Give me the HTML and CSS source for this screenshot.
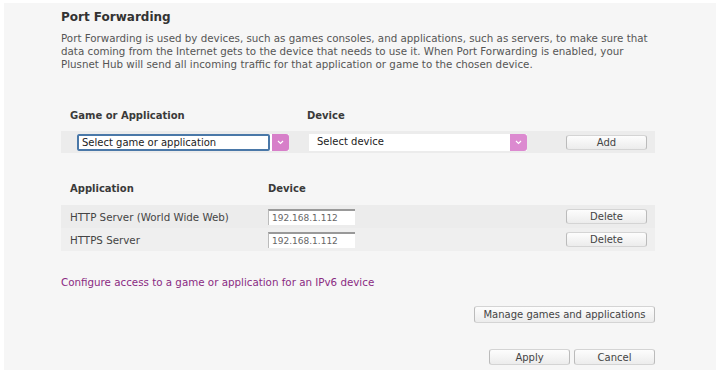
FILE: index.html
```html
<!DOCTYPE html>
<html lang="en">
  <head>
    <meta charset="UTF-8" />
    <title>Port Forwarding</title>
    <link rel="stylesheet" href="styles.css">
  </head>
  <body>
    <div class="panel">
      <h1>Port Forwarding</h1>
      <p class="intro">
        Port Forwarding is used by devices, such as games consoles, and applications, such as servers, to make sure that
        data coming from the Internet gets to the device that needs to use it. When Port Forwarding is enabled, your
        Plusnet Hub will send all incoming traffic for that application or game to the chosen device.
      </p>

      <div class="add-head">
        <span class="col-game">Game or Application</span>
        <span>Device</span>
      </div>
      <div class="add-row">
        <div class="select focused game-select">
          <span class="select-text">Select game or application</span>
          <span class="arrow"><svg width="7" height="5" viewBox="0 0 7 5"><path d="M1 1 L3.5 3.5 L6 1" fill="none" stroke="#fff" stroke-width="1.2"/></svg></span>
        </div>
        <div class="select device-select">
          <span class="select-text">Select device</span>
          <span class="arrow"><svg width="7" height="5" viewBox="0 0 7 5"><path d="M1 1 L3.5 3.5 L6 1" fill="none" stroke="#fff" stroke-width="1.2"/></svg></span>
        </div>
        <button class="btn row-btn">Add</button>
      </div>

      <div class="list-head">
        <span class="col-app">Application</span>
        <span>Device</span>
      </div>
      <div class="list-row">
        <span class="col-app">HTTP Server (World Wide Web)</span>
        <span class="ip">192.168.1.112</span>
        <button class="btn row-btn">Delete</button>
      </div>
      <div class="list-row alt">
        <span class="col-app">HTTPS Server</span>
        <span class="ip">192.168.1.112</span>
        <button class="btn row-btn">Delete</button>
      </div>

      <a class="ipv6-link" href="#">Configure access to a game or application for an IPv6 device</a>

      <div class="manage">
        <button class="btn manage-btn">Manage games and applications</button>
      </div>
      <div class="actions">
        <button class="btn action-btn">Apply</button>
        <button class="btn action-btn">Cancel</button>
      </div>
    </div>
  </body>
</html>
```

FILE: styles.css
```css
* {
  margin: 0;
  padding: 0;
  box-sizing: border-box;
}

body {
  font-family: "DejaVu Sans", Verdana, sans-serif;
  background-color: #fff;
  color: #444;
  padding: 3px 4px 5px;
  font-size: 10.3px;
}

.panel {
  background-color: #f6f6f6;
  height: 367px;
  padding: 7px 0 0 57px;
}

h1 {
  font-size: 12px;
  font-weight: bold;
  color: #333;
  margin-bottom: 8px;
}

.intro {
  width: 595px;
  line-height: 13px;
  color: #555;
}

.add-head,
.list-head {
  display: flex;
  font-size: 10px;
  font-weight: bold;
  color: #3a3a3a;
  padding-left: 9px;
}

.add-head {
  margin-top: 39px;
}

.add-head .col-game {
  width: 237px;
}

.add-row {
  display: flex;
  align-items: center;
  width: 594px;
  height: 22px;
  margin-top: 10px;
  background-color: #ececec;
  padding-left: 16px;
}

.select {
  display: flex;
  height: 17px;
  background-color: #fff;
  font-size: 10px;
}

.select-text {
  flex: 1;
  padding-left: 3px;
  line-height: 15px;
  color: #222;
}

.game-select {
  width: 212px;
  margin-right: 20px;
}

.focused .select-text {
  border: 2px solid #4a78a8;
  border-radius: 2px;
  line-height: 13px;
}

.device-select {
  width: 218px;
}

.device-select .select-text {
  padding-left: 8px;
}

.arrow {
  width: 17px;
  margin-left: 2px;
  background-color: #d77fc9;
  border-radius: 0 3px 3px 0;
  display: flex;
  align-items: center;
  justify-content: center;
}

.device-select .arrow {
  margin-left: 0;
  background-color: #dc8ad0;
}

.btn {
  font-family: inherit;
  font-size: 10px;
  color: #444;
  background: linear-gradient(#fdfdfd, #ececec);
  border: 1px solid #d4d4d4;
  border-left-color: #bbb;
  border-right-color: #bbb;
  border-radius: 3px;
  height: 15px;
  line-height: 13px;
}

.row-btn {
  width: 81px;
  margin-left: auto;
  margin-right: 8px;
}

.list-head {
  margin-top: 30px;
}

.list-head .col-app {
  width: 198px;
}

.list-row {
  display: flex;
  align-items: center;
  width: 594px;
  height: 23px;
  background-color: #ececec;
  padding-left: 9px;
}

.list-head + .list-row {
  margin-top: 11px;
}

.list-row.alt {
  background-color: #efefef;
}

.list-row .col-app {
  width: 198px;
  color: #444;
}

.ip {
  width: 87px;
  height: 16px;
  background-color: #fff;
  border-top: 2px solid #999;
  border-left: 1px solid #bbb;
  padding-left: 3px;
  line-height: 14px;
  font-size: 9px;
  color: #666;
}

.ipv6-link {
  display: block;
  margin-top: 25px;
  color: #8a2a82;
  text-decoration: none;
}

.manage {
  display: flex;
  justify-content: flex-end;
  width: 594px;
  margin-top: 18px;
}

.manage-btn {
  width: 181px;
  height: 17px;
}

.actions {
  display: flex;
  justify-content: flex-end;
  gap: 4px;
  width: 594px;
  margin-top: 26px;
}

.action-btn {
  width: 81px;
  height: 16px;
}
```
